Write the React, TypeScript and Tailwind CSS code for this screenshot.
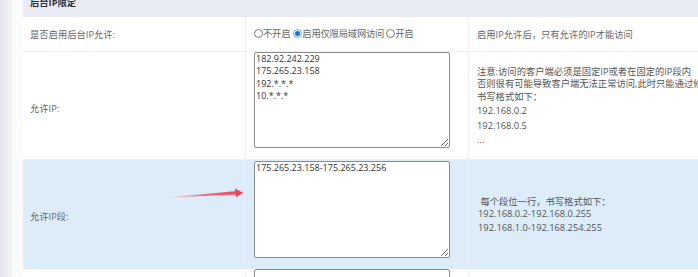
import React from 'react';

const font = "font-['Open_Sans','Noto_Sans_CJK_SC',sans-serif]";

const Radio = ({ checked = false }: { checked?: boolean }) => (
  <span
    className={`inline-flex h-[9px] w-[9px] shrink-0 items-center justify-center rounded-full border bg-white ${
      checked ? 'border-[#6fa5ee]' : 'border-[#7a7a7a]'
    }`}
  >
    {checked && <span className="h-[5px] w-[5px] rounded-full bg-[#1a6fe0]" />}
  </span>
);

const Area = ({ value, h }: { value: string; h: string }) => (
  <textarea
    readOnly
    value={value}
    className={`block w-[196px] ${h} resize-y rounded-[2px] border border-[#8c8c8c] bg-white px-[1px] py-0 text-[9px] leading-[12.3px] text-[#333] outline-none ${font}`}
  />
);

export default function App() {
  return (
    <div className={`relative flex h-[277px] w-[698px] overflow-hidden bg-white ${font} text-[9.3px] text-[#666]`}>
      {/* side gutter */}
      <div className="w-[12px] shrink-0 bg-gradient-to-r from-[#e5e6ed] to-[#f3f3f7]" />
      <div className="w-[11px] shrink-0 bg-[#fbfbfc]" />

      <div className="w-[800px] shrink-0">
        {/* header */}
        <div className="h-[17px] overflow-hidden bg-[#e8ebf3]">
          <div className="-mt-[12px] flex h-[29px] items-center px-[7px] font-bold text-[#333]">后台IP限定</div>
        </div>

        {/* row 1 */}
        <div className="flex h-[35px] border-b border-[#efefef]">
          <div className="flex w-[223px] items-center border-r border-[#efefef] px-[7px] pt-[2px]">是否启用后台IP允许:</div>
          <div className="flex w-[223px] items-center border-r border-[#efefef] px-[8px] pb-[1px] tracking-[-0.2px]">
            <Radio />
            <span className="mr-[3px]">不开启</span>
            <Radio checked />
            <span className="mr-[2px]">启用仅限局域网访问</span>
            <Radio />
            <span>开启</span>
          </div>
          <div className="flex flex-1 items-center px-[8px] pt-[2px]">启用IP允许后，只有允许的IP才能访问</div>
        </div>

        {/* row 2 */}
        <div className="flex h-[108px] border-b border-[#efefef]">
          <div className="flex w-[223px] items-center border-r border-[#efefef] px-[7px] pt-[6px]">允许IP:</div>
          <div className="w-[223px] border-r border-[#efefef] px-[8px] pt-0">
            <Area value={'182.92.242.229\n175.265.23.158\n192.*.*.*\n10.*.*.*'} h="h-[96px]" />
          </div>
          <div className="flex flex-1 flex-col justify-center whitespace-nowrap px-[8px] pt-[1px] text-[#555]">
            <div className="leading-[12px]">注意:访问的客户端必须是固定IP或者在固定的IP段内</div>
            <div className="leading-[12px]">否则很有可能导致客户端无法正常访问,此时只能通过修改配置文件来关闭此功能</div>
            <div className="leading-[13px]">书写格式如下：</div>
            <div className="leading-[16px]">192.168.0.2</div>
            <div className="leading-[14px]">192.168.0.5</div>
            <div className="leading-[14px]">...</div>
          </div>
        </div>

        {/* row 3 */}
        <div className="flex h-[109px] bg-[#dcecf9]">
          <div className="flex w-[223px] items-center border-r border-[#e3eef8] px-[7px] pt-[4px]">允许IP段:</div>
          <div className="w-[223px] border-r border-[#e3eef8] px-[8px] pt-[1px]">
            <Area value={'175.265.23.158-175.265.23.256'} h="h-[97px]" />
          </div>
          <div className="flex flex-1 flex-col justify-center whitespace-pre px-[9px] pt-[1px] text-[#555]">
            <div className="leading-[11px]"> 每个段位一行，书写格式如下：</div>
            <div className="leading-[14px]">192.168.0.2-192.168.0.255</div>
            <div className="leading-[14px]">192.168.1.0-192.168.254.255</div>
          </div>
        </div>

        {/* row 4 */}
        <div className="flex h-[60px]">
          <div className="w-[223px] border-r border-[#efefef]" />
          <div className="w-[223px] border-r border-[#efefef] px-[8px]">
            <Area value="" h="h-[96px]" />
          </div>
          <div className="flex-1" />
        </div>
      </div>

      {/* annotation arrow */}
      <svg className="pointer-events-none absolute left-0 top-0" width="698" height="277" viewBox="0 0 698 277">
        <defs>
          <linearGradient id="arr" x1="165" y1="0" x2="240" y2="0" gradientUnits="userSpaceOnUse">
            <stop offset="0" stopColor="#f4637a" stopOpacity="0.15" />
            <stop offset="0.5" stopColor="#f25068" stopOpacity="0.8" />
            <stop offset="1" stopColor="#f0445c" />
          </linearGradient>
        </defs>
        <polygon points="165,197.8 236.5,191 237,194.4" fill="url(#arr)" />
        <polygon points="235,188.4 243.3,192.8 236,197.2" fill="#f0445c" />
      </svg>
    </div>
  );
}
